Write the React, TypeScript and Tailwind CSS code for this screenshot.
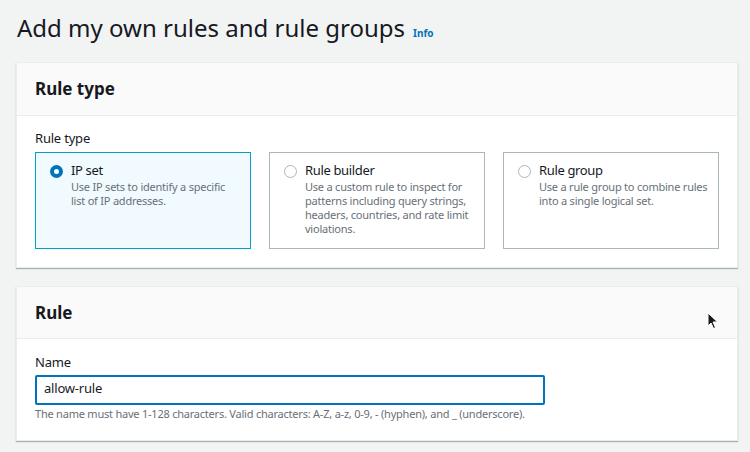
import React from "react";

const tiles = [
  {
    title: "IP set",
    lines: ["Use IP sets to identify a specific", "list of IP addresses."],
    selected: true,
  },
  {
    title: "Rule builder",
    lines: [
      "Use a custom rule to inspect for",
      "patterns including query strings,",
      "headers, countries, and rate limit",
      "violations.",
    ],
    selected: false,
  },
  {
    title: "Rule group",
    lines: ["Use a rule group to combine rules", "into a single logical set."],
    selected: false,
  },
];

function Radio({ selected }: { selected: boolean }) {
  return selected ? (
    <span className="mt-[4px] flex h-[13px] w-[13px] shrink-0 items-center justify-center rounded-full bg-[#0073bb]">
      <span className="h-[5px] w-[5px] rounded-full bg-white" />
    </span>
  ) : (
    <span className="mt-[4px] h-[13px] w-[13px] shrink-0 rounded-full border border-[#aab7b8] bg-white" />
  );
}

export default function App() {
  return (
    <div
      className="relative h-[452px] w-[750px] overflow-hidden bg-[#f2f3f3] text-[#16191f]"
      style={{ fontFamily: '"Noto Sans", "Open Sans", sans-serif' }}
    >
      <div className="flex flex-col pl-[16px] pt-[10px]">
        <div className="flex items-baseline gap-[8px] pl-[1px]">
          <h1 className="text-[24px] leading-[36px] font-normal">Add my own rules and rule groups</h1>
          <span className="text-[10px] font-bold text-[#0073bb]">Info</span>
        </div>

        <div className="mt-[16px] w-[722px] border border-[#eaeded] bg-white shadow-[0_1px_1px_0_rgba(0,28,36,0.3)]">
          <div className="flex h-[53px] items-center border-b border-[#eaeded] bg-[#fafafa] px-[18px]">
            <h2 className="text-[17px] font-bold">Rule type</h2>
          </div>
          <div className="px-[18px] pb-[18px] pt-[12px]">
            <div className="text-[13px] leading-[20px] tracking-[-0.2px]">Rule type</div>
            <div className="mt-[4px] grid grid-cols-3 gap-[18px]">
              {tiles.map((t) => (
                <div
                  key={t.title}
                  className={
                    t.selected
                      ? "flex h-[97px] gap-[8px] border border-[#00a1c9] bg-[#f1faff] px-[14px] pt-[8px]"
                      : "flex h-[97px] gap-[8px] border border-[#aab7b8] bg-white px-[14px] pt-[8px]"
                  }
                >
                  <Radio selected={t.selected} />
                  <div className="flex flex-col">
                    <div className="text-[13px] leading-[18px] tracking-[-0.35px]">{t.title}</div>
                    <div className="mt-[1px] text-[11px] leading-[14px] tracking-[-0.22px] text-[#687078]">
                      {t.lines.map((l) => (
                        <div key={l} className="whitespace-nowrap">
                          {l}
                        </div>
                      ))}
                    </div>
                  </div>
                </div>
              ))}
            </div>
          </div>
        </div>

        <div className="mt-[18px] w-[722px] border border-[#eaeded] bg-white shadow-[0_1px_1px_0_rgba(0,28,36,0.3)]">
          <div className="flex h-[52px] items-center border-b border-[#eaeded] bg-[#fafafa] px-[18px]">
            <h2 className="text-[17px] font-bold">Rule</h2>
          </div>
          <div className="px-[18px] pb-[18px] pt-[13px]">
            <div className="text-[13px] leading-[20px] tracking-[-0.2px]">Name</div>
            <div className="mt-[3px] flex h-[30px] w-[510px] items-center rounded-[2px] border-2 border-[#0073bb] px-[7px] pb-[2px] text-[13px] tracking-[-0.2px]">
              allow-rule
            </div>
            <div className="mt-[1px] text-[11px] leading-[16px] tracking-[-0.22px] text-[#687078]">
              The name must have 1-128 characters. Valid characters: A-Z, a-z, 0-9, - (hyphen), and _ (underscore).
            </div>
          </div>
        </div>
      </div>

      <svg className="absolute left-[707px] top-[312px]" width="12" height="18" viewBox="0 0 12 18">
        <path d="M1 1 L1 14 L4 11 L6.5 16.5 L8.5 15.5 L6 10 L10.5 10 Z" fill="#16191f" stroke="#fff" strokeWidth="1" />
      </svg>
    </div>
  );
}
